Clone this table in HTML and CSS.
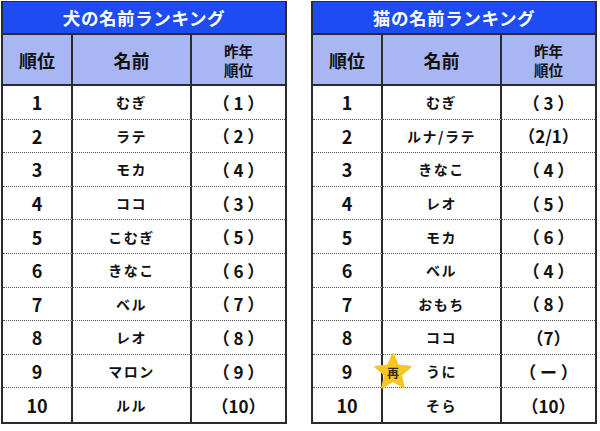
FILE: index.html
```html
<!DOCTYPE html>
<html lang="ja">
<head>
<meta charset="utf-8">
<link rel="stylesheet" href="styles.css">
</head>
<body>
<div class="page">
  <div class="panel">
    <div class="title">犬の名前ランキング</div>
    <div class="head">順位</div><div class="head">名前</div><div class="head small">昨年<br>順位</div>
    <div class="c n">1</div><div class="c nm">むぎ</div><div class="c p">（ 1 ）</div>
    <div class="c n">2</div><div class="c nm">ラテ</div><div class="c p">（ 2 ）</div>
    <div class="c n">3</div><div class="c nm">モカ</div><div class="c p">（ 4 ）</div>
    <div class="c n">4</div><div class="c nm">ココ</div><div class="c p">（ 3 ）</div>
    <div class="c n">5</div><div class="c nm">こむぎ</div><div class="c p">（ 5 ）</div>
    <div class="c n">6</div><div class="c nm">きなこ</div><div class="c p">（ 6 ）</div>
    <div class="c n">7</div><div class="c nm">ベル</div><div class="c p">（ 7 ）</div>
    <div class="c n">8</div><div class="c nm">レオ</div><div class="c p">（ 8 ）</div>
    <div class="c n">9</div><div class="c nm">マロン</div><div class="c p">（ 9 ）</div>
    <div class="c n last">10</div><div class="c nm last">ルル</div><div class="c p last">（10）</div>
  </div>
  <div class="panel">
    <div class="title">猫の名前ランキング</div>
    <div class="head">順位</div><div class="head">名前</div><div class="head small">昨年<br>順位</div>
    <div class="c n">1</div><div class="c nm">むぎ</div><div class="c p">（ 3 ）</div>
    <div class="c n">2</div><div class="c nm">ルナ/ラテ</div><div class="c p">（2/1）</div>
    <div class="c n">3</div><div class="c nm">きなこ</div><div class="c p">（ 4 ）</div>
    <div class="c n">4</div><div class="c nm">レオ</div><div class="c p">（ 5 ）</div>
    <div class="c n">5</div><div class="c nm">モカ</div><div class="c p">（ 6 ）</div>
    <div class="c n">6</div><div class="c nm">ベル</div><div class="c p">（ 4 ）</div>
    <div class="c n">7</div><div class="c nm">おもち</div><div class="c p">（ 8 ）</div>
    <div class="c n">8</div><div class="c nm">ココ</div><div class="c p">（7）</div>
    <div class="c n">9</div><div class="c nm star-cell"><span class="star"><svg viewBox="0 0 40 40" width="38" height="38"><polygon points="20,2 25.3,14.2 38.5,15.5 28.5,24.3 31.4,37.3 20,30.5 8.6,37.3 11.5,24.3 1.5,15.5 14.7,14.2" fill="#f6c624" stroke="#f6c624" stroke-width="2" stroke-linejoin="round"/></svg><b>再</b></span>うに</div><div class="c p">（ ー ）</div>
    <div class="c n last">10</div><div class="c nm last">そら</div><div class="c p last">（10）</div>
  </div>
</div>
</body>
</html>
```

FILE: styles.css
```css
html, body {
  margin: 0;
  padding: 0;
  background: #ffffff;
}
body {
  width: 600px;
  height: 431px;
  overflow: hidden;
  font-family: "Noto Sans CJK JP", "Noto Sans", sans-serif;
  color: #111111;
}
.page {
  display: flex;
  gap: 24px;
  padding: 1px 0 0 1px;
}
.panel {
  display: grid;
  grid-template-columns: 70px 119px 1fr;
  grid-template-rows: 33px 51px repeat(10, 1fr);
  width: 286px;
  height: 423px;
  box-sizing: border-box;
  border: 2px solid #2b2b2b;
  border-top: 1px solid #2b2b2b;
}
.title {
  grid-column: 1 / 4;
  background: #1d4cf2;
  color: #ffffff;
  font-weight: 700;
  font-size: 17.5px;
  letter-spacing: 0.6px;
  display: flex;
  align-items: center;
  justify-content: center;
  border-bottom: 2px solid #2b2b2b;
}
.head {
  background: #a8b6f4;
  font-weight: 700;
  font-size: 18px;
  display: flex;
  align-items: center;
  justify-content: center;
  text-align: center;
  border-bottom: 2px solid #2b2b2b;
  border-right: 2px solid #2b2b2b;
}
.head.small {
  font-size: 14.5px;
  line-height: 19px;
  padding-top: 1px;
  border-right: none;
}
.c {
  display: flex;
  align-items: center;
  justify-content: center;
  border-bottom: 1px dotted #555555;
  font-weight: 700;
}
.c.last {
  border-bottom: none;
}
.n {
  font-size: 18px;
  border-right: 2px solid #2b2b2b;
}
.nm {
  font-size: 14px;
  letter-spacing: 1.5px;
  border-right: 2px solid #2b2b2b;
}
.p {
  font-size: 17px;
  white-space: pre;
}
.star-cell {
  position: relative;
}
.star {
  position: absolute;
  left: -9px;
  top: -3px;
  width: 38px;
  height: 38px;
}
.star svg {
  display: block;
}
.star b {
  position: absolute;
  left: 0;
  top: 0;
  width: 38px;
  height: 38px;
  display: flex;
  align-items: center;
  justify-content: center;
  font-size: 12px;
  font-weight: 700;
  letter-spacing: 0;
  padding-top: 4px;
  box-sizing: border-box;
  color: #3a2a00;
}
```
